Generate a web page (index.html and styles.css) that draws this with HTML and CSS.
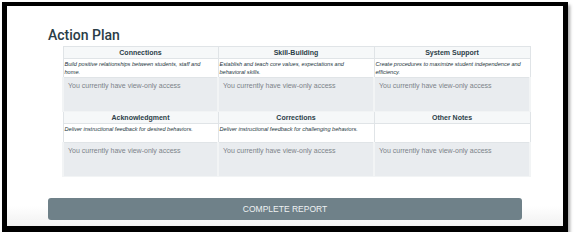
FILE: index.html
```html
<!doctype html>
<html>
<head>
<title>Action Plan</title>
<meta name=viewport content="width=device-width, initial-scale=1">
<link rel="stylesheet" href="styles.css">
</head>
<body>
<div class=frame>

<h1 class=title>Action Plan</h1>

<table class=plan>
<colgroup>
<col class=c1><col class=c2><col class=c3>
</colgroup>
<tr class=head>
    <th>Connections</th>
    <th>Skill-Building</th>
    <th>System Support</th>
</tr>
<tr class=desc>
    <td>Build positive relationships between students, staff and home.</td>
    <td>Establish and teach core values, expectations and behavioral skills.</td>
    <td>Create procedures to maximize student independence and efficiency.</td>
</tr>
<tr class=entry>
    <td>You currently have view-only access</td>
    <td>You currently have view-only access</td>
    <td>You currently have view-only access</td>
</tr>
<tr class=head>
    <th>Acknowledgment</th>
    <th>Corrections</th>
    <th>Other Notes</th>
</tr>
<tr class=desc>
    <td>Deliver instructional feedback for desired behaviors.</td>
    <td>Deliver instructional feedback for challenging behaviors.</td>
    <td></td>
</tr>
<tr class=entry>
    <td>You currently have view-only access</td>
    <td>You currently have view-only access</td>
    <td>You currently have view-only access</td>
</tr>
</table>

<div class=complete>COMPLETE REPORT</div>

</div>
</body>
</html>
```

FILE: styles.css
```css
body {
    margin: 0;
    background-color: white;
    font-family: "Liberation Sans", Arial, sans-serif;
}
div.frame {
    margin: 2px 0 0 2px;
    height: 220px;
    width: 474px;
    padding: 0 41px;
    border-style: solid;
    border-color: black;
    border-width: 4px 5px 6px 5px;
    box-shadow: 2px 3px 3px rgba(0, 0, 0, 0.35);
    background: linear-gradient(to bottom, white 0, white 200px, #f1f1f1 220px);
    display: flex;
    flex-direction: column;
}
h1.title {
    margin: 21px 0 0 0;
    font-family: Roboto, "Liberation Sans", sans-serif;
    font-size: 14px;
    line-height: 16px;
    font-weight: 500;
    color: #2b3d47;
}
table.plan {
    margin: 3px 0 0 14px;
    width: 467px;
    table-layout: fixed;
    border-collapse: collapse;
    color: #2c3e48;
}
col.c1 { width: 155px; }
col.c2 { width: 156px; }
col.c3 { width: 156px; }
table.plan th,
table.plan td {
    border: 1px solid #e0e4e7;
    padding: 0;
}
tr.head { height: 12px; }
tr.head th {
    background-color: #f6f8f9;
    font-size: 7px;
    line-height: 10px;
    font-weight: bold;
    text-align: center;
}
tr.desc { height: 19px; }
tr.desc td {
    background-color: white;
    color: #253640;
    font-size: 5.6px;
    line-height: 8px;
    font-style: italic;
    vertical-align: top;
    padding: 1px 5px 0 1px;
}
tr.entry { height: 34px; }
tr.entry td {
    background-color: #e9ecef;
    border-color: #f2f4f5;
    border-width: 1px 2px;
    color: #7c8389;
    font-size: 7px;
    line-height: 10px;
    vertical-align: top;
    padding: 3px 4px;
}
div.complete {
    margin-top: 21px;
    height: 22px;
    line-height: 22px;
    border-radius: 3px;
    background-color: #6f8189;
    color: #eef1f3;
    font-size: 8.5px;
    text-align: center;
}
```
